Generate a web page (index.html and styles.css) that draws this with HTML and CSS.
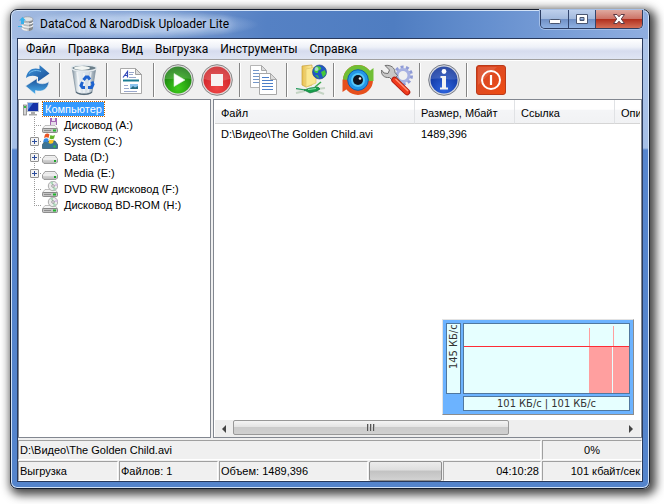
FILE: index.html
```html
<!DOCTYPE html>
<html lang="ru">
<head>
<meta charset="utf-8">
<title>DataCod &amp; NarodDisk Uploader Lite</title>
<link rel="stylesheet" href="styles.css">
</head>
<body>
<svg class="defs" aria-hidden="true">
  <defs>
    <linearGradient id="gBlue" x1="0" y1="0" x2="0" y2="1"><stop offset="0" stop-color="#1c4f96"/><stop offset="1" stop-color="#4db4f2"/></linearGradient>
    <linearGradient id="gBlue2" x1="0" y1="0" x2="1" y2="1"><stop offset="0" stop-color="#3f9ae0"/><stop offset="1" stop-color="#184a92"/></linearGradient>
    <radialGradient id="gGreen" cx=".5" cy=".8" r=".8"><stop offset="0" stop-color="#3fd01c"/><stop offset="1" stop-color="#12700c"/></radialGradient>
    <radialGradient id="gRed" cx=".5" cy=".8" r=".8"><stop offset="0" stop-color="#f04848"/><stop offset="1" stop-color="#c81a20"/></radialGradient>
    <radialGradient id="gInfo" cx=".5" cy=".85" r=".8"><stop offset="0" stop-color="#2f66e0"/><stop offset="1" stop-color="#0c2f96"/></radialGradient>
    <linearGradient id="gPower" x1="0" y1="0" x2="1" y2="1"><stop offset="0" stop-color="#d8401c"/><stop offset=".5" stop-color="#e04a20"/><stop offset="1" stop-color="#f04c10"/></linearGradient>
    <linearGradient id="gFolder" x1="0" y1="0" x2="1" y2="0"><stop offset="0" stop-color="#e8c050"/><stop offset="1" stop-color="#fff0a8"/></linearGradient>
    <linearGradient id="gDisk" x1="0" y1="0" x2="0" y2="1"><stop offset="0" stop-color="#f8f8f8"/><stop offset="1" stop-color="#b8b8b8"/></linearGradient>
    <linearGradient id="gBin" x1="0" y1="0" x2="1" y2="0"><stop offset="0" stop-color="#8798a4"/><stop offset=".25" stop-color="#e8eef2"/><stop offset=".7" stop-color="#d2dce4"/><stop offset="1" stop-color="#7b8b98"/></linearGradient>
    <g id="drive">
      <path d="M3 8.500h10l2.500 3H.5z" fill="#f4f4f4" stroke="#a8a8a8" stroke-width=".7"/>
      <rect x=".5" y="11.500" width="15" height="4" rx="1" fill="#c4c4c4" stroke="#777" stroke-width=".8"/>
      <path d="M2 13.500h7" stroke="#8c8c8c"/><rect x="11" y="12.500" width="3" height="2" fill="#1fb52c"/>
    </g>
    <g id="cd">
      <circle cx="11" cy="5" r="4.700" fill="#ececec" stroke="#999" stroke-width=".8"/>
      <path d="M11 5L8 1.500l3-1zM11 5l3.500 3-3 1.500z" fill="#a9d8b8"/><path d="M11 5l4-3 .5 3z" fill="#d9c3e6"/>
      <circle cx="11" cy="5" r="1.300" fill="#fff" stroke="#777" stroke-width=".7"/>
    </g>
  </defs>
</svg>

<main class="window">
  <header class="titlebar">
    <svg class="app-icon" viewBox="0 0 16 16" aria-hidden="true">
      <path d="M4 3v9c0 1.800 2.500 3 5.500 3s5.500-1.200 5.500-3V3z" fill="#b9bcbf"/>
      <path d="M11 4v11c2.500-.5 4-1.500 4-3V3z" fill="#85898d"/>
      <path d="M4 6c1 1.500 3 2 5.500 2S14.500 7.500 15 6M4 9.200c1 1.500 3 2 5.500 2s5-.5 5.500-2M4 12.200c1 1.500 3 2 5.500 2" fill="none" stroke="#f4f4f4" stroke-width="1.200"/>
      <ellipse cx="9.500" cy="3.200" rx="5.500" ry="2.400" fill="#dfe3e6" stroke="#8b9095" stroke-width=".6"/>
      <path d="M4.500 1L8 4.500H6V8H3V4.500H1z" fill="#38b1ea"/><path d="M0 10.500h4" stroke="#38b1ea"/>
    </svg>
    <h1 class="title">DataCod &amp; NarodDisk Uploader Lite</h1>
    <div class="caption">
      <button class="cap-btn min" aria-label="Свернуть"><svg viewBox="0 0 14 12"><rect x="1.500" y="6.500" width="11" height="4" rx="1" fill="#fff" stroke="#4a5670"/></svg></button>
      <button class="cap-btn max" aria-label="Развернуть"><svg viewBox="0 0 14 12"><path fill-rule="evenodd" d="M1.500 1.500h11v9h-11zM5 4.500v3h4v-3z" fill="#fff" stroke="#4a5670"/></svg></button>
      <button class="cap-btn close" aria-label="Закрыть"><svg viewBox="0 0 14 12"><path d="M1.500 1.500h3.500l2 2.300 2-2.300h3.500L9.300 6l3.200 4.500H9L7 8.200 5 10.500H1.500L4.700 6z" fill="#fff" stroke="#5d3a44"/></svg></button>
    </div>
  </header>

  <div class="client">
    <nav class="menu">
      <a href="#">Файл</a><a href="#">Правка</a><a href="#">Вид</a><a href="#">Выгрузка</a><a href="#">Инструменты</a><a href="#">Справка</a>
    </nav>

    <div class="toolbar" role="toolbar">
      <button aria-label="Обновить"><svg viewBox="0 0 32 32">
        <path d="M5 14C6 6 12 3 18.500 5V1L28.500 9.500 17 17.500V13C12.500 11 8.500 11.500 5 14z" fill="url(#gBlue2)"/>
        <path d="M28 17.500C27 25.500 21 28.500 14.500 26.500V30.500L4.500 22 16 14.500V18.500C20.500 20.500 24.500 20 28 17.500z" fill="url(#gBlue)" stroke="#f0f0f0" stroke-width=".6"/>
        <path d="M8 9.500c3.500-3.500 8-3.500 12-2" stroke="#79bff0" fill="none"/>
      </svg></button><span class="sep"></span>
      <button aria-label="Очистить"><svg viewBox="0 0 32 32">
        <path d="M4 3l4 25c3 3.500 13 3.500 16 0l4-25z" fill="url(#gBin)" stroke="#8797a3" stroke-width=".8"/>
        <path d="M9 8l3 20M16 9v20M23 8l-3 20" stroke="#fff" stroke-width="1.500" opacity=".6"/>
        <ellipse cx="16" cy="4" rx="12.500" ry="3" fill="#6c7f8a" stroke="#e4eaee" stroke-width="1.400"/>
        <ellipse cx="14" cy="4" rx="8" ry="1.900" fill="#f3f6f3"/>
        <path d="M8 28c3 3 13 3 16 0" stroke="#596c7a" fill="none" stroke-width="1.300"/>
        <g fill="none" stroke="#1e63cf" stroke-width="3"><path d="M15.500 16l2.500-3h2l2 2.500"/><path d="M24 17.500l1 3-1.500 3H20"/><path d="M17 23.500h-2.500l-1.500-2 1.500-3.500"/></g>
      </svg></button><span class="sep"></span>
      <button aria-label="Отчёт"><svg viewBox="0 0 32 32">
        <path d="M5.500 4.500h15l6 6v19h-21z" fill="#fff" stroke="#a9a9a9"/><path d="M20.500 4.500v6h6z" fill="#ddd" stroke="#a0a0a0"/>
        <path d="M8 13.500l4.500-6v6M9.500 11.500h3" fill="none" stroke="#3048b8" stroke-width="1.200"/>
        <path d="M14 8.500h5M14 10.500h4M14 13.500h7M9 21.500h4M9 24.500h5M9 27.500h13" stroke="#9aa8cc"/>
        <path d="M8 16.500h16" stroke="#1a7c93" stroke-width="2"/><path d="M15 20h8v5h-8z" fill="#8cc4ee"/><path d="M15 25l3-3 2 1.500 3-1.500v3z" fill="#256d84"/>
      </svg></button><span class="sep"></span>
      <button aria-label="Старт"><svg viewBox="0 0 32 32">
        <circle cx="16" cy="16" r="15.300" fill="#dedede" stroke="#858585"/><circle cx="16" cy="16" r="13.500" fill="url(#gGreen)"/>
        <path d="M3 15a13 13 0 0 1 26 0c-7-1-13 0-26 0z" fill="#fff" opacity=".16"/><path d="M12 9.500v13l11-6.500z" fill="#fff" stroke="#d4efd0" stroke-width=".6"/>
      </svg></button>
      <button aria-label="Стоп"><svg viewBox="0 0 32 32">
        <circle cx="16" cy="16" r="15.300" fill="#e2dada" stroke="#858585"/><circle cx="16" cy="16" r="13.500" fill="url(#gRed)"/>
        <path d="M3 15a13 13 0 0 1 26 0c-7 2-13 4-26 0z" fill="#fff" opacity=".16"/><rect x="10" y="10" width="12" height="12" fill="#f7f1f1"/>
      </svg></button><span class="sep"></span>
      <button aria-label="Копировать"><svg viewBox="0 0 32 32">
        <path d="M2.500 1.500h11l5 5v17h-16z" fill="#fff" stroke="#b5b5b5"/><path d="M13.500 1.500v5h5z" fill="#ddd" stroke="#aaa"/>
        <path d="M5 6.500h6M5 9.500h8M5 12.500h7M5 15.500h7M5 18.500h7" stroke="#7497c8"/>
        <path d="M11.500 9.500h11l6 6v15h-17z" fill="#fff" stroke="#a8a8a8"/><path d="M22.500 9.500v6h6z" fill="#ddd" stroke="#aaa"/>
        <path d="M14 13.500h7M14 16.500h11M14 19.500h11M14 22.500h11M14 25.500h11" stroke="#4c7fc8"/>
      </svg></button><span class="sep"></span>
      <button aria-label="Сетевая папка"><svg viewBox="0 0 32 32">
        <path d="M7 2l10-1v20l-6 2-4-2z" fill="url(#gFolder)" stroke="#c59d38" stroke-width=".7"/><path d="M11 5l10-2v16l-10 4z" fill="#fbe892" stroke="#e0c468" stroke-width=".7"/>
        <circle cx="24.500" cy="8" r="7" fill="#1f58c4" stroke="#264a86" stroke-width=".7"/>
        <path d="M21 2.500c3-1 6 1 5 2.500s-3 1-3 3-3 1-4-1zM26 8l4-2 1 4-3 3.500zM20 11l3 .5 1 3z" fill="#45c93a"/><circle cx="21.500" cy="5" r="2" fill="#cce6ff" opacity=".7"/>
        <path d="M1 25l9 1M1 29l9-2M21 27l8 3M22 25l8-1" stroke="#c4d4c4" stroke-width="2"/><path d="M1 24.500l9 1.500" stroke="#18995a"/>
        <path d="M9 26l6-2 8-1 2 2-3 2-7 2z" fill="#18a04c" stroke="#0b6d36" stroke-width=".6"/><path d="M13 25.500l8-1" stroke="#8fe8ae"/><path d="M20 23l6-5" stroke="#34a948" stroke-width="1.500"/>
      </svg></button><span class="sep"></span>
      <button aria-label="Наблюдение"><svg viewBox="0 0 32 32">
        <circle cx="16" cy="16" r="12.500" fill="none" stroke="#e6501e" stroke-width="5"/>
        <path d="M3.500 16a12.500 12.500 0 0 1 25 0" fill="none" stroke="#70bf35" stroke-width="5"/>
        <path d="M31.500 4v13h-6l-3-6z" fill="#70bf35"/><path d="M.5 15.500l6 .5 3 6-9 6z" fill="#e6501e"/>
        <circle cx="16" cy="16" r="10.300" fill="#2297e8" stroke="#0c5fae"/><circle cx="16" cy="16" r="7" fill="#53c7fa"/>
        <circle cx="16" cy="16" r="5" fill="#10151f"/><circle cx="18" cy="14.500" r="1.300" fill="#eee"/>
      </svg></button>
      <button aria-label="Настройки"><svg viewBox="0 0 32 32">
        <circle cx="22" cy="11.500" r="8.500" fill="none" stroke="#8f9bd6" stroke-width="3" stroke-dasharray="3 2.340"/><circle cx="22" cy="11.500" r="6" fill="none" stroke="#a7b1e2" stroke-width="3"/>
        <path d="M11 11L24 26" stroke="#8b8b8b" stroke-width="5"/>
        <path d="M4 1.500L8.500 6 7 9.500 3 9 .5 6C0 11 3 14 8.500 13.500l3 3 5-5-2.500-3C14 4 10 .5 4 1.500z" fill="#c8c8c8" stroke="#707070"/>
        <path d="M13.500 16L26 28" stroke="#b01a10" stroke-width="6.500" stroke-linecap="round"/><path d="M13.500 16L26 28" stroke="#ef3a1c" stroke-width="4.600" stroke-linecap="round"/><path d="M14.500 15L27 27" stroke="#ff9477" stroke-width="1.400"/>
      </svg></button><span class="sep"></span>
      <button aria-label="Информация"><svg viewBox="0 0 32 32">
        <circle cx="16" cy="16" r="15.300" fill="#d6d9e0" stroke="#757a86"/><circle cx="16" cy="16" r="13.500" fill="url(#gInfo)"/>
        <path d="M3 15a13 13 0 0 1 26 0c-7 2-15-2-26 0z" fill="#fff" opacity=".15"/>
        <circle cx="16" cy="7.500" r="2.400" fill="#fff"/><path d="M12.500 12H18v11.500h2v2h-8v-2h2V14h-1.500z" fill="#f2f2f2"/>
      </svg></button><span class="sep"></span>
      <button aria-label="Выход"><svg viewBox="0 0 32 32">
        <rect x="1.500" y="1.500" width="29" height="29" rx="2.500" fill="url(#gPower)" stroke="#b93a1b"/><path d="M3 3h19L3 21z" fill="#fff" opacity=".12"/>
        <circle cx="16" cy="16" r="9" fill="none" stroke="#fff" stroke-width="2"/><path d="M16 11v10" stroke="#fff" stroke-width="2.200"/>
      </svg></button>
    </div>

    <div class="panes">
      <section class="tree">
        <div class="node root"><svg class="ico" viewBox="0 0 16 16"><rect x=".5" y="4" width="3" height="10" fill="#d5d5d5" stroke="#777" stroke-width=".7"/><rect x="1" y="5" width="2" height="2" fill="#35bd43"/><rect x="4.500" y="1.500" width="11" height="9" fill="#1533a8" stroke="#bfc6d4"/><path d="M5 2h5L5 9z" fill="#5387de"/><path d="M8 11h4v2h2v1.500H6V13h2z" fill="#aaa"/></svg><span class="label selected">Компьютер</span></div>
        <ul>
          <li class="node"><span class="branch"></span><svg class="ico" viewBox="0 0 16 16"><use href="#drive"/><rect x="8" y="1" width="7" height="7" fill="#a468b4"/><rect x="10" y="1" width="3" height="3" fill="#f2e4f5"/><rect x="9" y="5" width="5" height="3" fill="#e4dce8"/></svg><span class="label">Дисковод (A:)</span></li>
          <li class="node"><span class="branch"><button class="exp" aria-label="Развернуть System"></button></span><svg class="ico" viewBox="0 0 16 16"><path d="M3 8h10l2.500 3.500v4H.5v-4z" fill="#3c7495" stroke="#295066" stroke-width=".7"/><rect x="11.500" y="12.500" width="2" height="2" fill="#3c3"/><path d="M3 1.500c2-1.500 3-1 4.500 0L6.500 5C5 4 4 4 2 5z" fill="#ea5423"/><path d="M8.500 2c1.500 1 3 1 4.500 0l-1 3.500c-1.500 1-3 1-4.500 0z" fill="#62b42c"/><path d="M2 6c1.500-1 3-1 4.500 0l-1 3.500C4 8.500 3 8.500 1 9.500z" fill="#338be0"/><path d="M7.500 6.500c1.500 1 3 1 4.500 0l-1 3.500c-1.500 1-3 1-4.500 0z" fill="#ffc820"/></svg><span class="label">System (C:)</span></li>
          <li class="node"><span class="branch"><button class="exp" aria-label="Развернуть Data"></button></span><svg class="ico" viewBox="0 0 16 16"><path d="M3 6.500h10l2.500 3.500v3l-1.500 1.500H2L.5 13v-3z" fill="url(#gDisk)" stroke="#8c8c8c" stroke-width=".8"/><path d="M1 10h14" stroke="#fff"/><rect x="12" y="11" width="2" height="2" fill="#1fa52c"/></svg><span class="label">Data (D:)</span></li>
          <li class="node"><span class="branch"><button class="exp" aria-label="Развернуть Media"></button></span><svg class="ico" viewBox="0 0 16 16"><path d="M3 6.500h10l2.500 3.500v3l-1.500 1.500H2L.5 13v-3z" fill="url(#gDisk)" stroke="#8c8c8c" stroke-width=".8"/><path d="M1 10h14" stroke="#fff"/><rect x="12" y="11" width="2" height="2" fill="#1fa52c"/></svg><span class="label">Media (E:)</span></li>
          <li class="node"><span class="branch"></span><svg class="ico" viewBox="0 0 16 16"><use href="#drive"/><use href="#cd"/></svg><span class="label">DVD RW дисковод (F:)</span></li>
          <li class="node"><span class="branch"></span><svg class="ico" viewBox="0 0 16 16"><use href="#drive"/><use href="#cd"/></svg><span class="label">Дисковод BD-ROM (H:)</span></li>
        </ul>
      </section>

      <section class="list">
        <div class="table-wrap">
          <table>
            <thead><tr><th class="wide">Файл</th><th>Размер, Мбайт</th><th>Ссылка</th><th>Опи</th></tr></thead>
            <tbody><tr><td>D:\Видео\The Golden Child.avi</td><td>1489,396</td><td></td><td></td></tr></tbody>
          </table>
        </div>
        <aside class="speed">
          <div class="speed-max"><span>145 КБ/с</span></div>
          <svg class="plot" viewBox="0 0 165 69" preserveAspectRatio="none" aria-hidden="true">
            <rect width="165" height="69" fill="#e6ffff"/>
            <path d="M125 22h23v47h-23zM149 22h16v47h-16zM125 4h1v18h-1zM149 2h1v20h-1z" fill="#ff9f9f"/>
            <rect y="22" width="165" height="1" fill="#ff2c36"/>
          </svg>
          <div class="speed-now">101 КБ/с | 101 КБ/с</div>
        </aside>
        <div class="hscroll">
          <button aria-label="Влево"><svg viewBox="0 0 4 8"><path d="M4 0v8L0 4z" fill="#444"/></svg></button>
          <div class="track"><div class="thumb"><i></i><i></i><i></i></div></div>
          <button aria-label="Вправо"><svg viewBox="0 0 4 8"><path d="M0 0v8l4-4z" fill="#444"/></svg></button>
        </div>
      </section>
    </div>

    <footer class="status">
      <div class="status-row top"><span>D:\Видео\The Golden Child.avi</span><span class="center">0%</span></div>
      <div class="status-row bottom"><span>Выгрузка</span><span>Файлов: 1</span><span>Объем: 1489,396</span><span class="bar"></span><span class="right">04:10:28</span><span class="right">101 кбайт/сек</span></div>
    </footer>
  </div>
</main>
</body>
</html>
```
FILE: styles.css
```css
* { box-sizing: border-box; }

body {
  margin: 0;
  min-height: 100vh;
  padding: 9px 14px 15px 10px;
  display: flex;
  overflow: hidden;
  background: #fff;
  color: #000;
  font: 11px/16px "Liberation Sans", Arial, sans-serif;
}

button { border: 0; padding: 0; background: none; font: inherit; }
svg { display: block; }
.defs { position: absolute; width: 0; height: 0; }

/* Window frame */
.window {
  flex: 1;
  min-width: 0;
  display: flex;
  flex-direction: column;
  padding: 0 6px 6px;
  border: 1px solid #141c2c;
  border-radius: 7px;
  background:
    radial-gradient(closest-side, rgba(190, 210, 240, .7) 50%, transparent) 4px 0 / 244px 29px no-repeat,
    linear-gradient(90deg, #a4bce2 0, #7f9fd2 20%, #5581c4 40%, #4f7dc1 60%, #6690cf 75%, #90aee0 100%) top / 100% 29px no-repeat,
    linear-gradient(#b0c6e8 0, #a4bee6 138px, #5685cd 140px, #5484cc 100%);
  box-shadow: inset 0 0 0 1px #d3e3f7, 3px 3px 10px 3px rgba(0, 0, 0, .72);
}

.titlebar {
  height: 28px;
  display: flex;
  align-items: center;
  gap: 6px;
  padding-left: 1px;
}
.app-icon { width: 16px; height: 16px; }
.title {
  margin: 0;
  flex: 1;
  font: 12px/18px Roboto, "Segoe UI", sans-serif;
  white-space: nowrap;
  text-shadow: 0 0 8px #dce8fa, 0 0 12px #c8daf5;
}
.caption {
  align-self: flex-start;
  display: flex;
  height: 19px;
  border: 1px solid #2c3d62;
  border-top: 0;
  border-radius: 0 0 5px 5px;
  overflow: hidden;
  box-shadow: 0 0 0 1px #a5c0e8;
}
.cap-btn {
  display: grid;
  place-items: center;
  width: 27px;
  border-right: 1px solid #33466e;
  background: linear-gradient(#bed0ec 0, #a2b9dd 50%, #6f8fc4 50%, #8fb1e2 100%);
}
.cap-btn.min { width: 28px; }
.cap-btn.close {
  width: 46px;
  border: 0;
  background: linear-gradient(#dfa99f 0, #cc7266 50%, #b02d1c 50%, #d47058 100%);
}
.cap-btn svg { width: 14px; height: 12px; }

.client {
  flex: 1;
  display: flex;
  flex-direction: column;
  border: 1px solid #28395c;
  background: #f0f0f0;
}

/* Menu and toolbar */
.menu {
  height: 21px;
  display: flex;
  align-items: center;
  gap: 12px;
  padding: 0 8px;
  border-bottom: 1px solid #a0a0a0;
  background: linear-gradient(#fff 0, #eef1f8 40%, #d6dcee 60%, #dfe5f3 100%);
}
.menu a {
  color: #000;
  text-decoration: none;
  font: 12px/18px Roboto, "Segoe UI", sans-serif;
}
.toolbar {
  height: 39px;
  display: flex;
  align-items: center;
  border-top: 1px solid #fff;
}
.toolbar button {
  width: 39px;
  height: 36px;
  padding-right: 1px;
  display: grid;
  place-items: center;
}
.toolbar svg { width: 32px; height: 32px; }
.sep {
  width: 8px;
  height: 34px;
  background: linear-gradient(90deg, transparent 2px, #858585 2px, #858585 3px, #fff 3px, #fff 4px, transparent 4px);
}

/* Panes */
.panes { flex: 1; display: flex; gap: 2px; }
.tree, .list { border: 1px solid #828790; background: #fff; }
.tree { width: 193px; padding: 1px 4px; }
.tree ul { margin: 0; padding: 0 0 0 7px; list-style: none; }
.node { height: 16px; display: flex; align-items: center; }
.ico { width: 16px; height: 16px; flex: none; }
.label { margin-left: 4px; padding: 0 2px; line-height: 14px; white-space: nowrap; }
.label.selected { background: #3399ff; color: #fff; outline: 1px dotted #c86400; }
.branch {
  width: 12px;
  height: 16px;
  display: flex;
  align-items: center;
  background:
    repeating-linear-gradient(90deg, #999 0 1px, transparent 1px 2px) 4px 8px / 8px 1px no-repeat,
    repeating-linear-gradient(#999 0 1px, transparent 1px 2px) 4px 0 / 1px 16px no-repeat;
}
.node:last-child .branch { background-size: 8px 1px, 1px 9px; }
.exp {
  width: 9px;
  height: 9px;
  border: 1px solid #919191;
  border-radius: 1px;
  background:
    linear-gradient(#2b4c9c, #2b4c9c) center / 5px 1px no-repeat,
    linear-gradient(#2b4c9c, #2b4c9c) center / 1px 5px no-repeat,
    #f4f4f4;
}

.list { flex: 1; min-width: 0; position: relative; display: flex; flex-direction: column; padding: 0 1px; }
.table-wrap { flex: 1; overflow: hidden; }
table { width: 500px; table-layout: fixed; border-collapse: separate; border-spacing: 0; }
th, td { padding: 0 0 0 6px; text-align: left; font-weight: 400; white-space: nowrap; overflow: hidden; }
.wide { width: 200px; }
th {
  height: 24px;
  padding-top: 2px;
  border-right: 1px solid #e0e2e5;
  border-bottom: 1px solid #d5d5d5;
  background: linear-gradient(#fff 0, #fff 40%, #f4f5f7 45%, #f1f2f4 100%);
}
td { height: 20px; }

/* Speed graph */
.speed {
  position: absolute;
  right: 7px;
  bottom: 22px;
  width: 192px;
  height: 96px;
  padding: 3px;
  display: grid;
  grid-template-columns: 15px 1fr;
  grid-template-rows: 1fr 15px;
  gap: 2px;
  border: 1px solid #e3e3e3;
  border-right-color: #8c8c8c;
  border-bottom-color: #8c8c8c;
  background: #6cb3ff;
  color: #333;
  font: 11px/13px "DejaVu Sans Condensed", Tahoma, sans-serif;
}
.speed-max, .plot, .speed-now { border: 1px solid #50789f; background: #e6ffff; }
.speed-max { display: flex; justify-content: flex-end; writing-mode: vertical-rl; transform: rotate(180deg); line-height: 13px; }
.plot { width: 100%; height: 100%; }
.speed-now { grid-column: 2; text-align: center; }

/* Scrollbar */
.hscroll { height: 17px; display: flex; background: #eee; }
.hscroll button { width: 18px; display: grid; place-items: center; }
.hscroll button svg { width: 4px; height: 8px; }
.track { flex: 1; display: flex; }
.thumb {
  width: 71%;
  height: 15px;
  display: flex;
  align-items: center;
  justify-content: center;
  gap: 1px;
  border: 1px solid #989898;
  border-radius: 2px;
  background: linear-gradient(#f4f4f4 0, #e3e3e3 48%, #cbcbcb 50%, #d0d0d0 100%);
}
.thumb i { width: 2px; height: 7px; border-left: 1px solid #555; border-right: 1px solid #bbb; }

/* Status bar */
.status { padding-top: 1px; }
.status-row { display: grid; height: 20px; gap: 1px; margin-top: 1px; }
.status-row.top { grid-template-columns: 1fr 100px; }
.status-row.bottom { grid-template-columns: 100px 99px 149px 73px 1fr 100px; }
.status-row span {
  padding: 0 1px;
  line-height: 18px;
  white-space: nowrap;
  overflow: hidden;
  border: 1px solid #a0a0a0;
  border-right-color: #fff;
  border-bottom-color: #fff;
}
.status-row .center { text-align: center; }
.status-row .right { text-align: right; }
.status-row .bar {
  border: 1px solid #8e8e8e;
  border-radius: 2px;
  background: linear-gradient(#ececec 0, #dedede 45%, #c2c2c2 50%, #d2d2d2 100%);
}
```
